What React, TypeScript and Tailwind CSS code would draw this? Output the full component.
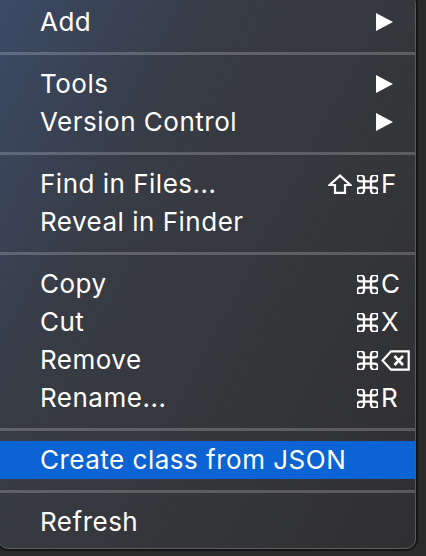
import { FC, ReactNode } from 'react'

const Cmd: FC = () => (
  <svg width="21" height="19" viewBox="3 3 18 18" preserveAspectRatio="none" fill="none" stroke="white" strokeWidth="2" strokeLinecap="round" strokeLinejoin="round">
    <path d="M15 6v12a3 3 0 1 0 3-3H6a3 3 0 1 0 3 3V6a3 3 0 1 0-3 3h12a3 3 0 1 0-3-3" />
  </svg>
)

const Shift: FC = () => (
  <svg width="24" height="20" viewBox="0 0 24 20" fill="none" stroke="white" strokeWidth="2.2" strokeLinejoin="miter">
    <polygon points="12,1.6 22.4,11 17,11 17,18.9 7,18.9 7,11 1.6,11" />
  </svg>
)

const Backspace: FC = () => (
  <svg width="29" height="21" viewBox="0 0 29 21" fill="none" stroke="white" strokeWidth="2.2">
    <path d="M1.6 10.5 L10 1.3 H27.7 V19.7 H10 Z" />
    <path d="M13.5 6 L22 15 M22 6 L13.5 15" strokeWidth="2.6" />
  </svg>
)

const Arrow: FC = () => (
  <svg width="17" height="18" viewBox="0 0 17 18" className="mr-[22px]">
    <polygon points="0,0 17,9 0,18" fill="white" />
  </svg>
)

const Sep: FC = () => <div className="mt-[11px] mb-[10px] h-[3px] bg-white/20" />

type RowProps = {
  label: string
  mods?: ReactNode
  keyChar?: ReactNode
  sub?: boolean
  active?: boolean
}

const Row: FC<RowProps> = ({ label, mods, keyChar, sub, active }) => (
  <div className={`h-[38px] flex items-center pl-[41px] ${active ? 'bg-[#0b63d4]' : ''}`}>
    <span className="leading-none tracking-[0.5px]">{label}</span>
    {sub && (
      <span className="ml-auto flex items-center">
        <Arrow />
      </span>
    )}
    {keyChar && (
      <span className="ml-auto flex items-center">
        <span className="flex items-center justify-end gap-[5px]">{mods}</span>
        <span className="w-[30px] ml-[3px] leading-none flex items-center">{keyChar}</span>
        <span className="w-[4px]" />
      </span>
    )}
  </div>
)

export default function App() {
  return (
    <div className="w-[426px] h-[556px] overflow-hidden bg-[#2a2a2a]">
      <div
        className="ml-[-2px] mt-[-6px] w-[418px] h-[555px] rounded-[10px] border border-[#5a5a5c] shadow-[0_0_0_2px_#161616] overflow-hidden pt-[8px] text-white text-[26px] bg-[linear-gradient(118deg,#3b4a66_0%,#373b43_35%,#343538_70%,#2f2f31_100%)]"
        style={{ fontFamily: 'Inter, "Liberation Sans", sans-serif' }}
      >
        <Row label="Add" sub />
        <Sep />
        <Row label="Tools" sub />
        <Row label="Version Control" sub />
        <Sep />
        <Row label="Find in Files..." mods={<><Shift /><Cmd /></>} keyChar="F" />
        <Row label="Reveal in Finder" />
        <Sep />
        <Row label="Copy" mods={<Cmd />} keyChar="C" />
        <Row label="Cut" mods={<Cmd />} keyChar="X" />
        <Row label="Remove" mods={<Cmd />} keyChar={<Backspace />} />
        <Row label="Rename..." mods={<Cmd />} keyChar="R" />
        <Sep />
        <Row label="Create class from JSON" active />
        <Sep />
        <Row label="Refresh" />
      </div>
    </div>
  )
}
